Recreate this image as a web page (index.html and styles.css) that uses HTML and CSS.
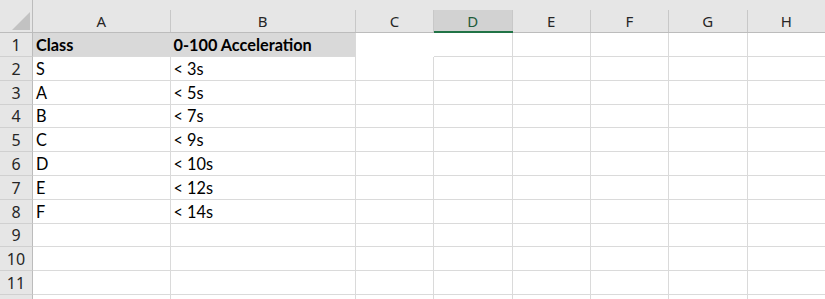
FILE: index.html
```html
<html>
    <head>
        <title>Classes</title>
        <link rel="stylesheet" href="styles.css">
    </head>
    <body>
        <div class="sheet">
            <div class="corner">
                <svg width="19" height="19" viewBox="0 0 19 19"><polygon points="0,18 18,18 18,0" fill="#c2c2c2"/></svg>
            </div>
            <div class="col-head"><span>A</span></div>
            <div class="col-head"><span>B</span></div>
            <div class="col-head"><span>C</span></div>
            <div class="col-head active"><span>D</span></div>
            <div class="col-head"><span>E</span></div>
            <div class="col-head"><span>F</span></div>
            <div class="col-head"><span>G</span></div>
            <div class="col-head"><span>H</span></div>
        </div>
        <script>
            var sheet = document.querySelector('.sheet');
            var rows = [
                ['Class', '0-100 Acceleration'],
                ['S', '< 3s'],
                ['A', '< 5s'],
                ['B', '< 7s'],
                ['C', '< 9s'],
                ['D', '< 10s'],
                ['E', '< 12s'],
                ['F', '< 14s']
            ];
            // 11 rows fit the window, the 12th only shows its top edge
            for (var r = 1; r <= 12; r++) {
                var head = document.createElement('div');
                head.className = 'row-head';
                if (r <= 11) head.textContent = r;
                sheet.appendChild(head);
                for (var c = 0; c < 8; c++) {
                    var cell = document.createElement('div');
                    cell.className = 'cell';
                    if (r === 1 && c < 2) cell.classList.add('title');
                    if (r === 1 && c === 2) cell.classList.add('open');
                    var data = rows[r - 1];
                    if (data && data[c]) cell.textContent = data[c];
                    sheet.appendChild(cell);
                }
            }
        </script>
    </body>
</html>
```
FILE: styles.css
```css
body {
    margin: 0;
    overflow: hidden;
    background: #ffffff;
}
.sheet {
    display: grid;
    grid-template-columns: 33px 137.5px 185.5px 78px 78.5px 78.5px 78px 78.5px 78.5px;
    grid-template-rows: 33px 24px repeat(10, 23.8px) 10px;
    font-family: "Lato", "Liberation Sans", sans-serif;
    font-size: 16.3px;
    color: #000000;
}
.corner {
    background: #e6e6e6;
    border-right: 1px solid #bcbcbc;
    border-bottom: 1px solid #bcbcbc;
    box-sizing: border-box;
    display: flex;
    justify-content: flex-end;
    align-items: flex-end;
    padding: 0 1px 1px 0;
}
.corner svg {
    display: block;
}
.col-head {
    background: #e6e6e6;
    border-bottom: 1px solid #bcbcbc;
    box-sizing: border-box;
    display: flex;
    align-items: flex-end;
    font-family: "Noto Sans", sans-serif;
    font-size: 15px;
    color: #262626;
}
.col-head span {
    flex: 1;
    height: 22px;
    line-height: 23px;
    text-align: center;
    border-right: 1px solid #c8c8c8;
}
.col-head.active {
    border-bottom: 2px solid #217346;
}
.col-head.active span {
    background: #d2d2d2;
    color: #1d5b39;
    height: 21px;
}
.row-head {
    background: #e6e6e6;
    border-right: 1px solid #bcbcbc;
    border-bottom: 1px solid #d0d0d0;
    box-sizing: border-box;
    display: flex;
    align-items: flex-end;
    justify-content: center;
    font-family: "Noto Sans", sans-serif;
    font-size: 16px;
    line-height: 22px;
    color: #262626;
}
.cell {
    border-right: 1px solid #dadada;
    border-bottom: 1px solid #dadada;
    box-sizing: border-box;
    display: flex;
    align-items: flex-end;
    padding: 0 3px 0;
    line-height: 22px;
    white-space: nowrap;
    overflow: hidden;
}
.cell.title {
    background: #d9d9d9;
    font-weight: bold;
}
.cell.open {
    border-right: none;
    border-bottom: none;
}
```
